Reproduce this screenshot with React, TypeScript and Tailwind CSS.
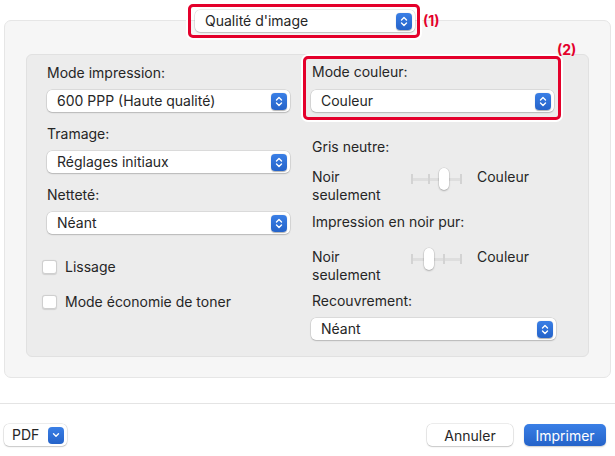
import React from "react";

const RED = "#e4002b";

function Stepper() {
  return (
    <span className="flex h-[17px] w-[16px] items-center justify-center rounded-[4px] bg-gradient-to-b from-[#3a7fe6] to-[#2563c9] shadow-[0_0.5px_1px_rgba(0,0,0,0.3)]">
      <svg width="8" height="11" viewBox="0 0 8 11" fill="none">
        <path d="M1.5 4 L4 1.5 L6.5 4" stroke="white" strokeWidth="1.4" strokeLinecap="round" strokeLinejoin="round" />
        <path d="M1.5 7 L4 9.5 L6.5 7" stroke="white" strokeWidth="1.4" strokeLinecap="round" strokeLinejoin="round" />
      </svg>
    </span>
  );
}

function Select({ value, width }: { value: string; width: string }) {
  return (
    <div
      className={`${width} flex h-[22px] items-center justify-between rounded-[5px] bg-white pl-[10px] pr-[3px] shadow-[0_0_0_0.5px_rgba(0,0,0,0.14),0_1px_1.5px_rgba(0,0,0,0.16)]`}
    >
      <span className="leading-none">{value}</span>
      <Stepper />
    </div>
  );
}

function Checkbox({ label }: { label: string }) {
  return (
    <div className="flex h-[14px] items-center">
      <span className="h-[14px] w-[15px] rounded-[3px] border border-[#cfcfcf] bg-white shadow-[0_0.5px_1px_rgba(0,0,0,0.12)]" />
      <span className="ml-[8px] leading-none">{label}</span>
    </div>
  );
}

function Stepped({ pos }: { pos: number }) {
  const stops = [1, 18, 33, 50];
  return (
    <div className="relative h-[22px] w-[52px] shrink-0">
      <div className="absolute left-[1px] right-[1px] top-[10px] h-[3px] rounded-full bg-[#dedede]" />
      {stops.map((x) => (
        <div key={x} className="absolute top-[6px] h-[10px] w-[2px] bg-[#d3d3d3]" style={{ left: x - 1 }} />
      ))}
      <div
        className="absolute top-0 h-[22px] w-[10px] rounded-[5px] bg-white shadow-[0_0_0_0.5px_rgba(0,0,0,0.12),0_1px_2px_rgba(0,0,0,0.22)]"
        style={{ left: stops[pos] - 5 }}
      />
    </div>
  );
}

function SliderRow({ pos }: { pos: number }) {
  return (
    <div className="flex pl-[9px] leading-[18px]">
      <div className="w-[99px]">
        <div>Noir</div>
        <div>seulement</div>
      </div>
      <Stepped pos={pos} />
      <div className="ml-[14px]">Couleur</div>
    </div>
  );
}

export default function App() {
  return (
    <div
      className="flex h-[456px] w-[615px] flex-col bg-white text-[14px] text-[#262626]"
      style={{ fontFamily: "Inter, 'Noto Sans', sans-serif" }}
    >
      {/* panel chooser */}
      <div className="relative z-10 flex h-[34px] items-center pl-[188px] mt-[4px]">
        <div
          className="flex h-[34px] w-[232px] items-center rounded-[5px] border-[3px] pl-[4px] shadow-[0_0_0_2px_#fff]"
          style={{ borderColor: RED }}
        >
          <Select value="Qualité d'image" width="w-[220px]" />
        </div>
        <span className="ml-[3px] -mt-[2px] font-bold text-[#e4002b]">(1)</span>
      </div>

      {/* settings box */}
      <div className="mx-[4px] -mt-[18px] h-[358px] rounded-[7px] border border-[#e6e6e6] bg-[#f6f6f6] px-[21px] pt-[33px]">
        <div className="relative flex h-[303px] rounded-[6px] border border-[#e1e1e1] bg-[#ececec]">
          {/* left column */}
          <div className="flex w-[276px] flex-col pl-[20px] pt-[10px]">
            <div className="h-4 leading-4">Mode impression:</div>
            <div className="mt-[9px]">
              <Select value="600 PPP (Haute qualité)" width="w-[243px]" />
            </div>
            <div className="mt-[14px] h-4 leading-4">Tramage:</div>
            <div className="mt-[9px]">
              <Select value="Réglages initiaux" width="w-[243px]" />
            </div>
            <div className="mt-[14px] h-4 leading-4">Netteté:</div>
            <div className="mt-[9px]">
              <Select value="Néant" width="w-[243px]" />
            </div>
            <div className="mt-[26px] -ml-[5px]">
              <Checkbox label="Lissage" />
            </div>
            <div className="mt-[21px] -ml-[5px]">
              <Checkbox label="Mode économie de toner" />
            </div>
          </div>

          {/* right column */}
          <div className="flex flex-col pt-[1px]">
            <div
              className="relative w-[258px] rounded-[5px] border-[3px] pb-[5px] pl-[5px] pr-[4px] pt-[5px] shadow-[0_0_0_2px_#fff]"
              style={{ borderColor: RED }}
            >
              <span className="absolute -top-[20px] left-[251px] font-bold text-[#e4002b]">(2)</span>
              <div className="h-4 pl-[1px] leading-4">Mode couleur:</div>
              <div className="mt-[10px]">
                <Select value="Couleur" width="w-[243px]" />
              </div>
            </div>
            <div className="mt-[19px] h-4 pl-[9px] leading-4">Gris neutre:</div>
            <div className="mt-[13px]">
              <SliderRow pos={2} />
            </div>
            <div className="mt-[10px] h-4 pl-[9px] leading-4">Impression en noir pur:</div>
            <div className="mt-[18px]">
              <SliderRow pos={1} />
            </div>
            <div className="mt-[9px] h-4 pl-[9px] leading-4">Recouvrement:</div>
            <div className="mt-[9px] pl-[8px]">
              <Select value="Néant" width="w-[245px]" />
            </div>
          </div>
        </div>
      </div>

      {/* footer */}
      <div className="mt-[25px] h-px bg-[#e4e4e4]" />
      <div className="mt-[20px] flex items-center">
        <div className="ml-[4px] flex h-[22px] w-[63px] items-center justify-between rounded-[5px] bg-white pl-[8px] pr-[3px] shadow-[0_0_0_0.5px_rgba(0,0,0,0.14),0_1px_1.5px_rgba(0,0,0,0.16)]">
          <span className="leading-none">PDF</span>
          <span className="flex h-[17px] w-[16px] items-center justify-center rounded-[4px] bg-gradient-to-b from-[#3a7fe6] to-[#2563c9]">
            <svg width="8" height="6" viewBox="0 0 8 6" fill="none">
              <path d="M1.5 1.8 L4 4.3 L6.5 1.8" stroke="white" strokeWidth="1.4" strokeLinecap="round" strokeLinejoin="round" />
            </svg>
          </span>
        </div>
        <div className="ml-auto flex h-[22px] w-[86px] items-center justify-center rounded-[5px] bg-white shadow-[0_0_0_0.5px_rgba(0,0,0,0.14),0_1px_1.5px_rgba(0,0,0,0.16)]">
          Annuler
        </div>
        <div className="ml-[11px] mr-[9px] flex h-[22px] w-[82px] items-center justify-center rounded-[5px] bg-gradient-to-b from-[#3a7fe6] to-[#2563c9] text-white shadow-[0_1px_1.5px_rgba(0,0,0,0.2)]">
          Imprimer
        </div>
      </div>
    </div>
  );
}
